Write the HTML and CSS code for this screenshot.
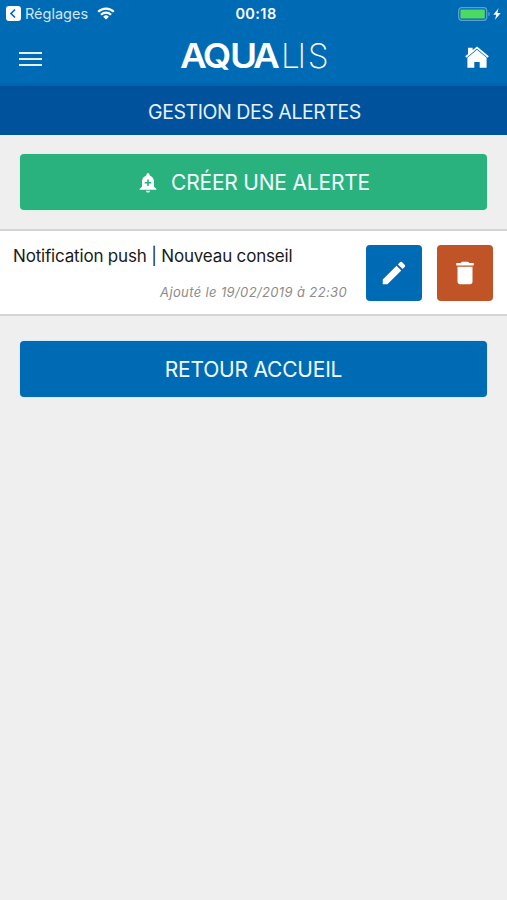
FILE: index.html
```html
<!DOCTYPE html>
<html lang="fr">
<head>
  <meta charset="UTF-8" />
  <meta name="viewport" content="width=device-width, initial-scale=1.0"/>
  <title>Aqualis - Gestion des alertes</title>
  <link rel="stylesheet" href="styles.css">
</head>
<body>
  <header class="header">
    <div class="status-bar">
      <div class="status-left">
        <svg class="back-icon" width="15" height="15" viewBox="0 0 15 15">
          <rect width="15" height="15" rx="3" fill="#fff"/>
          <path d="M9 3.5L5 7.5l4 4" fill="none" stroke="#006bb5" stroke-width="1.7"/>
        </svg>
        <span class="back-label">Réglages</span>
        <svg class="wifi-icon" width="18" height="13" viewBox="0 0 18 13">
          <g fill="none" stroke="#fff" stroke-width="2.2">
            <path d="M1.2 4.8a11 11 0 0 1 15.6 0"/>
            <path d="M4 7.8a7 7 0 0 1 10 0"/>
          </g>
          <path d="M9 12.6L6.2 9.7a4 4 0 0 1 5.6 0z" fill="#fff"/>
        </svg>
      </div>
      <span class="clock">00:18</span>
      <div class="status-right">
        <svg width="44" height="14" viewBox="0 0 44 14">
          <rect x="0.7" y="0.7" width="28" height="12.6" rx="3" fill="none" stroke="#5c9fd2" stroke-width="1.3"/>
          <rect x="2.4" y="2.4" width="24.4" height="9.2" rx="1.2" fill="#4cd964"/>
          <path d="M30.3 4.8q1.5 .5 1.5 2.2t-1.5 2.2z" fill="#5c9fd2"/>
          <path d="M40.5 1.2L35.3 7.8h3l-1.3 5 5.7-6.8h-3.3z" fill="#fff"/>
        </svg>
      </div>
    </div>

    <div class="nav-bar">
      <button class="menu-btn" aria-label="Menu">
        <span></span>
        <span></span>
        <span></span>
      </button>
      <svg class="logo" width="150" height="30" viewBox="0 0 150 30">
        <text class="logo-bold" x="0.9 21.5 46.3 67.2" y="28" transform="scale(1.1 1)">AQUA</text>
        <text class="logo-light" x="102 118.5 128.7" y="28">LIS</text>
      </svg>
      <button class="home-btn" aria-label="Accueil">
        <svg width="24" height="22" viewBox="0 0 24 22" fill="#fff">
          <path d="M12 0.4L7.6 4.1V1.8H3v6.1L0.2 10.3l1.2 1.4L12 2.7l10.6 9 1.2-1.4z"/>
          <path d="M12 3.8L2.4 11.8v10h6.9V16h5.4v5.8h6.900v-10z"/>
        </svg>
      </button>
    </div>
  </header>

  <h1 class="page-title"><span>GESTION DES ALERTES</span></h1>

  <main>
    <button class="btn btn-green">
      <svg class="bell-icon" width="18" height="20" viewBox="0 0 18 20">
        <path d="M9 0.3c-1 0-1.6.7-1.6 1.6v.5C4.6 3.2 3 5.6 3 8.5v5.3L0.6 16v.8h16.8V16L15 13.8V8.5c0-2.9-1.6-5.3-4.4-6.1v-.5C10.6 1 10 0.3 9 0.3zM7.1 17.700a1.9 1.9 0 0 0 3.8 0z" fill="#fff"/>
        <path d="M9 6.5v6.6M5.7 9.8h6.6" stroke="#29b27e" stroke-width="1.6"/>
      </svg>
      <span>CRÉER UNE ALERTE</span>
    </button>

    <div class="alert-item">
      <div class="alert-text">
        <p class="alert-name">Notification push | Nouveau conseil</p>
        <p class="alert-date">Ajouté le 19/02/2019 à 22:30</p>
      </div>
      <button class="icon-btn edit" aria-label="Modifier">
        <svg width="30" height="30" viewBox="0 0 24 24" fill="#fff">
          <path d="M3 17.25V21h3.75L17.81 9.94l-3.75-3.75L3 17.25zM20.71 7.04a1 1 0 0 0 0-1.41l-2.34-2.34a1 1 0 0 0-1.41 0l-1.83 1.83 3.75 3.75 1.83-1.83z"/>
        </svg>
      </button>
      <button class="icon-btn delete" aria-label="Supprimer">
        <svg width="30" height="30" viewBox="0 0 24 24" fill="#fff">
          <path d="M6 19c0 1.100.9 2 2 2h8c1.100 0 2-.9 2-2V7H6v12zM19 4h-3.5l-1-1h-5l-1 1H5v2h14V4z"/>
        </svg>
      </button>
    </div>

    <button class="btn btn-blue">RETOUR ACCUEIL</button>
  </main>
</body>
</html>
```
FILE: styles.css
```css
* {
  box-sizing: border-box;
}

body {
  margin: 0;
  min-height: 100vh;
  background-color: #efefef;
  font-family: Inter, 'Liberation Sans', sans-serif;
}

button {
  border: none;
  padding: 0;
  font-family: inherit;
  background: none;
  cursor: pointer;
}

svg {
  display: block;
}

.header {
  height: 86px;
  background: linear-gradient(to bottom, #006bb5 82px, #0061aa 86px);
  color: white;
}

.status-bar {
  display: grid;
  grid-template-columns: 1fr auto 1fr;
  align-items: center;
  height: 27px;
  padding: 0 5px 0 6px;
}

.status-left {
  display: flex;
  align-items: center;
}

.back-label {
  margin-left: 4px;
  font-size: 14.5px;
  color: #cfe5f6;
}

.wifi-icon {
  margin-left: 9px;
}

.clock {
  padding-left: 4px;
  font-size: 14.5px;
  font-weight: 600;
  letter-spacing: 0.4px;
}

.status-right {
  display: flex;
  justify-content: flex-end;
}

.nav-bar {
  display: flex;
  justify-content: space-between;
  align-items: center;
  height: 59px;
  padding: 0 18px 0 19px;
}

.menu-btn {
  display: flex;
  flex-direction: column;
  gap: 4px;
  width: 23px;
  margin-top: 4px;
}

.menu-btn span {
  height: 2px;
  background-color: #e4f1fb;
}

.logo {
  overflow: visible;
  margin-top: -3px;
}

.logo text {
  font-size: 33.5px;
  fill: white;
}

.logo .logo-bold {
  font-weight: 600;
}

.logo .logo-light {
  font-weight: 200;
}

.page-title {
  display: flex;
  justify-content: center;
  align-items: center;
  height: 49px;
  margin: 0;
  padding: 2px 0 0 2px;
  background-color: #00529c;
  color: #e6f2fc;
  font-size: 19.5px;
  font-weight: 400;
  letter-spacing: -0.43px;
}

main {
  display: flex;
  flex-direction: column;
  padding-top: 19px;
}

.btn {
  display: flex;
  justify-content: center;
  align-items: center;
  height: 56px;
  margin: 0 20px;
  border-radius: 4px;
  color: #f3fbff;
  font-size: 21px;
  letter-spacing: -0.2px;
}

.btn-green {
  padding: 1px 0 0 2px;
  background-color: #29b27e;
  box-shadow: 0 0 0 1px #d9f5e8;
}

.btn-blue {
  background-color: #006bb5;
  box-shadow: 0 0 0 1px #d5ebf9;
}

.bell-icon {
  margin-right: 14px;
}

.alert-item {
  display: flex;
  align-items: center;
  height: 87px;
  margin: 19px 0 25px;
  padding: 0 14px 0 13px;
  background-color: white;
  border-top: 2px solid #d4d4d4;
  border-bottom: 2px solid #d4d4d4;
}

.alert-text {
  flex: 1;
}

.alert-name {
  margin: -1px 0 17px;
  font-size: 17px;
  line-height: 22px;
  letter-spacing: -0.18px;
  color: #1a1a1a;
}

.alert-date {
  margin: 0 19px 0 0;
  font-size: 13px;
  line-height: 16px;
  font-style: italic;
  letter-spacing: 0.37px;
  text-align: right;
  color: #8c8c8c;
}

.icon-btn {
  display: flex;
  justify-content: center;
  align-items: center;
  width: 56px;
  height: 56px;
  border-radius: 4px;
}

.edit {
  background-color: #006bb5;
}

.delete {
  margin-left: 15px;
  background-color: #c05427;
}
```
